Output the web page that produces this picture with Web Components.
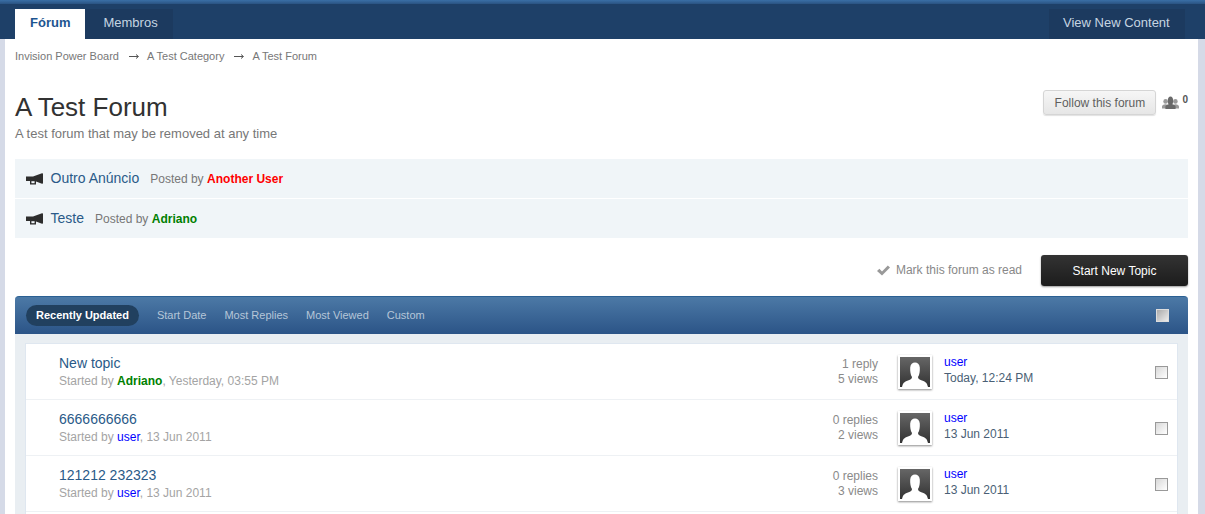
<!DOCTYPE html>
<html>
<head>
<meta charset="utf-8">
<title>A Test Forum</title>
<style>
  html, body { margin: 0; height: 514px; overflow: hidden; }
  body { background: #d5dae7; font: 13px/18px "Liberation Sans", Arial, sans-serif; color: #5a5a5a; }
  ipb-content { margin: 0 7px 0 5px; }
</style>
</head>
<body>
<ipb-header></ipb-header>
<ipb-content>
  <ipb-breadcrumb></ipb-breadcrumb>
  <ipb-title></ipb-title>
  <ipb-announcement title-text="Outro Anúncio" author="Another User" color="#ff0000"></ipb-announcement>
  <ipb-announcement title-text="Teste" author="Adriano" color="#008000"></ipb-announcement>
  <ipb-actions></ipb-actions>
  <ipb-topics>
    <ipb-topic title-text="New topic" author="Adriano" color="#008000" started="Yesterday, 03:55 PM" replies="1 reply" views="5 views" last="Today, 12:24 PM"></ipb-topic>
    <ipb-topic title-text="6666666666" author="user" color="#0000ff" started="13 Jun 2011" replies="0 replies" views="2 views" last="13 Jun 2011"></ipb-topic>
    <ipb-topic title-text="121212 232323" author="user" color="#0000ff" started="13 Jun 2011" replies="0 replies" views="3 views" last="13 Jun 2011"></ipb-topic>
  </ipb-topics>
</ipb-content>
<script>
class IpbHeader extends HTMLElement {
  constructor() {
    super();
    this.attachShadow({ mode: "open" });
    this.shadowRoot.innerHTML = `
      <style>
        :host { display: block; height: 39px; box-sizing: border-box; padding: 9px 20px 0 15px; background: #1e4068; position: relative; }
        :host::before { content: ""; position: absolute; left: 0; right: 0; top: 0; height: 4px; background: linear-gradient(#3a6fa6, #2a5382); }
        nav { display: flex; height: 30px; }
        a { display: block; padding: 0 14px; line-height: 27px; font-size: 13px; color: #c5d5e2; background: #1c3a5f; }
        a.on { background: #fff; color: #1d5590; font-weight: bold; height: 30px; padding: 0 15px; }
        a.new { margin-left: auto; padding: 0 15px 0 14px; width: 107px; }
        a.two { padding: 0 15px 0 18px; }
      </style>
      <nav>
        <a class="on">Fórum</a>
        <a class="two">Membros</a>
        <a class="new">View New Content</a>
      </nav>`;
  }
}
class IpbBreadcrumb extends HTMLElement {
  constructor() {
    super();
    this.attachShadow({ mode: "open" });
    this.shadowRoot.innerHTML = `
      <style>
        :host { display: block; background: #fff; padding: 8px 10px 0; height: 32px; box-sizing: border-box; font-size: 11px; color: #777; line-height: 18px; }
        div { display: flex; align-items: center; }
        svg { margin: 1px 8px 0 10px; }
      </style>
      <div>
        <span>Invision Power Board</span>
        <svg width="10" height="7" viewBox="0 0 10 7"><path d="M0 3.5H9M7 1.5L9.5 3.5L7 5.5" fill="none" stroke="#555" stroke-width="1"/></svg>
        <span>A Test Category</span>
        <svg width="10" height="7" viewBox="0 0 10 7"><path d="M0 3.5H9M7 1.5L9.5 3.5L7 5.5" fill="none" stroke="#555" stroke-width="1"/></svg>
        <span>A Test Forum</span>
      </div>`;
  }
}
class IpbTitle extends HTMLElement {
  constructor() {
    super();
    this.attachShadow({ mode: "open" });
    this.shadowRoot.innerHTML = `
      <style>
        :host { display: flex; justify-content: space-between; background: #fff; padding: 19px 10px 0; height: 88px; box-sizing: border-box; }
        h1 { margin: 2px 0 0; font-size: 26px; line-height: 30px; font-weight: normal; color: #323232; }
        p { margin: 3px 0 0; font-size: 13px; line-height: 18px; color: #777; }
        .follow { display: flex; align-items: flex-start; }
        button { height: 25px; width: 113px; padding: 0; margin: 0; border: 1px solid #d5d5d5; border-radius: 3px; background: linear-gradient(#f6f6f6, #e6e6e6); box-shadow: 0 1px 1px rgba(0,0,0,.12); font: 12px "Liberation Sans", Arial, sans-serif; color: #5f5f5f; }
        svg { margin: 6px 0 0 6px; }
        b { font-size: 10px; line-height: 12px; margin: 4px 0 0 3px; color: #555; }
      </style>
      <div>
        <h1>A Test Forum</h1>
        <p>A test forum that may be removed at any time</p>
      </div>
      <div class="follow">
        <button>Follow this forum</button>
        <svg width="17" height="13" viewBox="0 0 17 13">
          <circle cx="3.6" cy="5.4" r="2.3" fill="#9a9a9a"/><circle cx="13.4" cy="5.4" r="2.3" fill="#9a9a9a"/>
          <path fill="#9a9a9a" d="M0 12.5V10.4C0 9.2 1.4 8.6 3.6 8.2C5.8 8.6 7 9 7 12.5ZM17 12.5V10.4C17 9.2 15.6 8.6 13.4 8.2C11.2 8.6 10 9 10 12.5Z"/>
          <path fill="#696969" d="M3.4 13V10.8C3.4 9.4 5 8.8 6.6 8.3C5.4 6.4 5.2 .4 8.5 .4C11.8 .4 11.6 6.4 10.4 8.3C12 8.8 13.6 9.4 13.6 10.8V13Z"/>
        </svg>
        <b>0</b>
      </div>`;
  }
}
class IpbAnnouncement extends HTMLElement {
  constructor() {
    super();
    this.attachShadow({ mode: "open" });
    this.shadowRoot.innerHTML = `
      <style>
        :host { display: block; background: #fff; padding: 0 10px 1px; }
        div { display: flex; align-items: center; height: 39px; padding-left: 11px; background: #f0f5f8; font-size: 12px; color: #777; }
        svg { margin-right: 7.5px; }
        a { font-size: 14px; color: #2a5a88; margin: -1px 11px 0 0; }
        b { margin-left: 3.5px; color: var(--c); }
      </style>
      <div>
        <svg width="17" height="12" viewBox="0 0 17 12"><path fill="#2d2d2d" d="M0 3.5H7L16 .3C16.6 .1 17 .3 17 1V10C17 10.7 16.6 10.9 16 10.7L10 8.6V11.5H4V8H0Z"/><rect x="5.4" y="8.2" width="3.2" height="2" fill="#f0f5f8"/></svg>
        <a></a><span>Posted by</span><b></b>
      </div>`;
  }
  connectedCallback() {
    this.shadowRoot.querySelector("a").textContent = this.getAttribute("title-text");
    const author = this.shadowRoot.querySelector("b");
    author.textContent = this.getAttribute("author");
    author.style.setProperty("--c", this.getAttribute("color"));
  }
}
class IpbActions extends HTMLElement {
  constructor() {
    super();
    this.attachShadow({ mode: "open" });
    this.shadowRoot.innerHTML = `
      <style>
        :host { display: flex; align-items: center; justify-content: flex-end; background: #fff; padding: 17px 10px 10px; height: 58px; box-sizing: border-box; font-size: 12px; color: #888; margin-top: -1px; }
        svg { margin: 0 6px 0 0; }
        span { margin: 0 19px 2px 0; }
        button { width: 147px; height: 31px; padding: 0; border: 0; border-radius: 3px; background: linear-gradient(#333, #1c1c1c); box-shadow: 0 1px 2px rgba(0,0,0,.4); color: #fff; font: 12px "Liberation Sans", Arial, sans-serif; }
      </style>
      <svg width="13" height="11" viewBox="0 0 13 11"><path fill="#999" d="M0 6L2.4 3.8L5 6.4L10.8 .5L13 2.6L5 10.6Z"/></svg>
      <span>Mark this forum as read</span>
      <button>Start New Topic</button>`;
  }
}
class IpbTopics extends HTMLElement {
  constructor() {
    super();
    this.attachShadow({ mode: "open" });
    this.shadowRoot.innerHTML = `
      <style>
        :host { display: block; background: #fff; padding: 0 10px; }
        header { display: flex; align-items: center; height: 38px; box-sizing: border-box; padding: 0 19px 0 11px; border-radius: 4px 4px 0 0; border-top: 1px solid #2a6093; background: linear-gradient(#4c79a6, #2b5487); font-size: 11px; color: #b6c6d8; }
        span { margin: 0 18px 2px 0; }
        span.on { padding: 0 10px; margin: 0 18px 0 0; height: 21px; line-height: 21px; border-radius: 11px; background: #21405f; color: #fff; font-weight: bold; }
        i { margin: 0 0 0 auto; width: 11px; height: 11px; border: 1px solid #ddd; background: linear-gradient(135deg, #aaa, #ececec); }
        .body { background: #e9eef2; padding: 9px 10px 0; height: 180px; box-sizing: border-box; }
        .list { background: #fff; border: 1px solid #dfe7f0; border-bottom: 0; height: 100%; box-sizing: border-box; }
      </style>
      <header>
        <span class="on">Recently Updated</span>
        <span>Start Date</span>
        <span>Most Replies</span>
        <span>Most Viewed</span>
        <span>Custom</span>
        <i></i>
      </header>
      <div class="body"><div class="list"><slot></slot></div></div>`;
  }
}
class IpbTopic extends HTMLElement {
  constructor() {
    super();
    this.attachShadow({ mode: "open" });
    this.shadowRoot.innerHTML = `
      <style>
        :host { display: flex; align-items: center; height: 56px; box-sizing: border-box; border-bottom: 1px solid #eef1f4; padding: 0 9px 0 33px; font-size: 12px; }
        .main { flex: 1; }
        .title { font-size: 14px; line-height: 18px; color: #2a5a88; }
        .sub { line-height: 15px; margin-top: 2px; color: #a4a4a4; }
        .stats { text-align: right; line-height: 15px; color: #8a8a8a; margin-right: 20px; }
        .avatar { width: 30px; height: 30px; padding: 2px; background: #fff; box-shadow: 0 1px 2px rgba(0,0,0,.45); margin-right: 12px; }
        .avatar svg { display: block; }
        .last { width: 211px; line-height: 16px; color: #4a5f75; margin-bottom: 4px; }
        .last a { display: block; color: #0000ff; }
        .check { width: 11px; height: 11px; margin-top: 2px; border: 1px solid #999; background: linear-gradient(135deg, #d8d8d8, #fff); }
      </style>
      <div class="main">
        <div class="title"></div>
        <div class="sub">Started by <span class="author"></span>, <span class="started"></span></div>
      </div>
      <div class="stats"><div class="replies"></div><div class="views"></div></div>
      <div class="avatar">
        <svg width="30" height="30" viewBox="0 0 30 30">
          <defs><linearGradient id="g" x1="0" y1="0" x2="0" y2="1"><stop offset="0" stop-color="#666"/><stop offset="1" stop-color="#333"/></linearGradient></defs>
          <rect width="30" height="30" fill="url(#g)"/>
          <path fill="#fff" d="M2 30C3 26 4 25 8 23.5C11 22.5 12 21.5 12 20C10.5 18 10 14 10.2 10.5C10.5 7 12.5 5.5 15 5.5C17.5 5.5 19.5 7 19.8 10.5C20 14 19.5 18 18 20C18 21.5 19 22.5 22 23.5C26 25 27 26 28 30Z"/>
        </svg>
      </div>
      <div class="last"><a>user</a><span class="when"></span></div>
      <div class="check"></div>`;
  }
  connectedCallback() {
    const root = this.shadowRoot;
    root.querySelector(".title").textContent = this.getAttribute("title-text");
    const author = root.querySelector(".author");
    author.textContent = this.getAttribute("author");
    author.style.color = this.getAttribute("color");
    if (this.getAttribute("author") == "Adriano") author.style.fontWeight = "bold";
    root.querySelector(".started").textContent = this.getAttribute("started");
    root.querySelector(".replies").textContent = this.getAttribute("replies");
    root.querySelector(".views").textContent = this.getAttribute("views");
    root.querySelector(".when").textContent = this.getAttribute("last");
  }
}
class IpbContent extends HTMLElement {
  constructor() {
    super();
    this.attachShadow({ mode: "open" });
    this.shadowRoot.innerHTML = `<style>:host { display: block; background: #fff; }</style><slot></slot>`;
  }
}
customElements.define("ipb-header", IpbHeader);
customElements.define("ipb-content", IpbContent);
customElements.define("ipb-breadcrumb", IpbBreadcrumb);
customElements.define("ipb-title", IpbTitle);
customElements.define("ipb-announcement", IpbAnnouncement);
customElements.define("ipb-actions", IpbActions);
customElements.define("ipb-topics", IpbTopics);
customElements.define("ipb-topic", IpbTopic);
</script>
</body>
</html>
